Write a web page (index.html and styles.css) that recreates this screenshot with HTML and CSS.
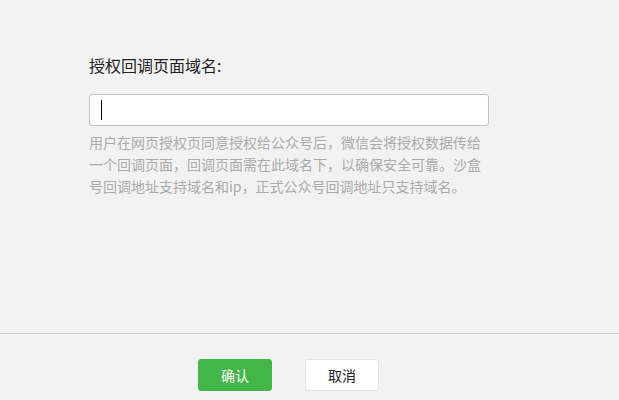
FILE: index.html
```html
<!DOCTYPE html>
<html lang="zh-CN">
<head>
<meta charset="utf-8">
<title>授权回调页面域名</title>
<link rel="stylesheet" href="styles.css">
</head>
<body>
<div class="dialog">
  <div class="dialog-body">
    <label class="field-label">授权回调页面域名:</label>
    <div class="field-input"><span class="caret"></span></div>
    <p class="field-tips">用户在网页授权页同意授权给公众号后，微信会将授权数据传给一个回调页面，回调页面需在此域名下，以确保安全可靠。沙盒号回调地址支持域名和ip，正式公众号回调地址只支持域名。</p>
  </div>
  <div class="dialog-footer">
    <button class="btn btn-primary">确认</button>
    <button class="btn btn-default">取消</button>
  </div>
</div>
</body>
</html>
```
FILE: styles.css
```css
html, body {
  margin: 0;
  padding: 0;
  background: #f2f2f2;
  font-family: "Noto Sans CJK SC", "Liberation Sans", sans-serif;
}
.dialog {
  width: 619px;
  height: 400px;
  display: flex;
  flex-direction: column;
}
.dialog-body {
  height: 333px;
  box-sizing: border-box;
  padding: 53px 0 0 89px;
}
.field-label {
  display: block;
  font-size: 16px;
  line-height: 24px;
  color: #222;
  margin-bottom: 17px;
}
.field-input {
  width: 400px;
  height: 32px;
  box-sizing: border-box;
  border: 1px solid #c2c2c2;
  border-radius: 3px;
  background: #fff;
  display: flex;
  align-items: center;
  padding-left: 11px;
}
.caret {
  width: 1px;
  height: 20px;
  background: #000;
}
.field-tips {
  margin: 5px 0 0;
  width: 400px;
  font-size: 14px;
  line-height: 22px;
  color: #aaaaaa;
}
.dialog-footer {
  flex: 1;
  border-top: 1px solid #cccccc;
  box-shadow: inset 0 1px 0 #ffffff;
  padding: 25px 0 0 198px;
  display: flex;
  gap: 33px;
  align-items: flex-start;
}
.btn {
  width: 74px;
  height: 32px;
  box-sizing: border-box;
  border-radius: 3px;
  font-family: inherit;
  font-size: 14px;
  padding: 0;
  cursor: pointer;
}
.btn-primary {
  background: #44b549;
  border: 1px solid #44b549;
  color: #fff;
}
.btn-default {
  background: #fff;
  border: 1px solid #e4e4e4;
  color: #222;
}
```
